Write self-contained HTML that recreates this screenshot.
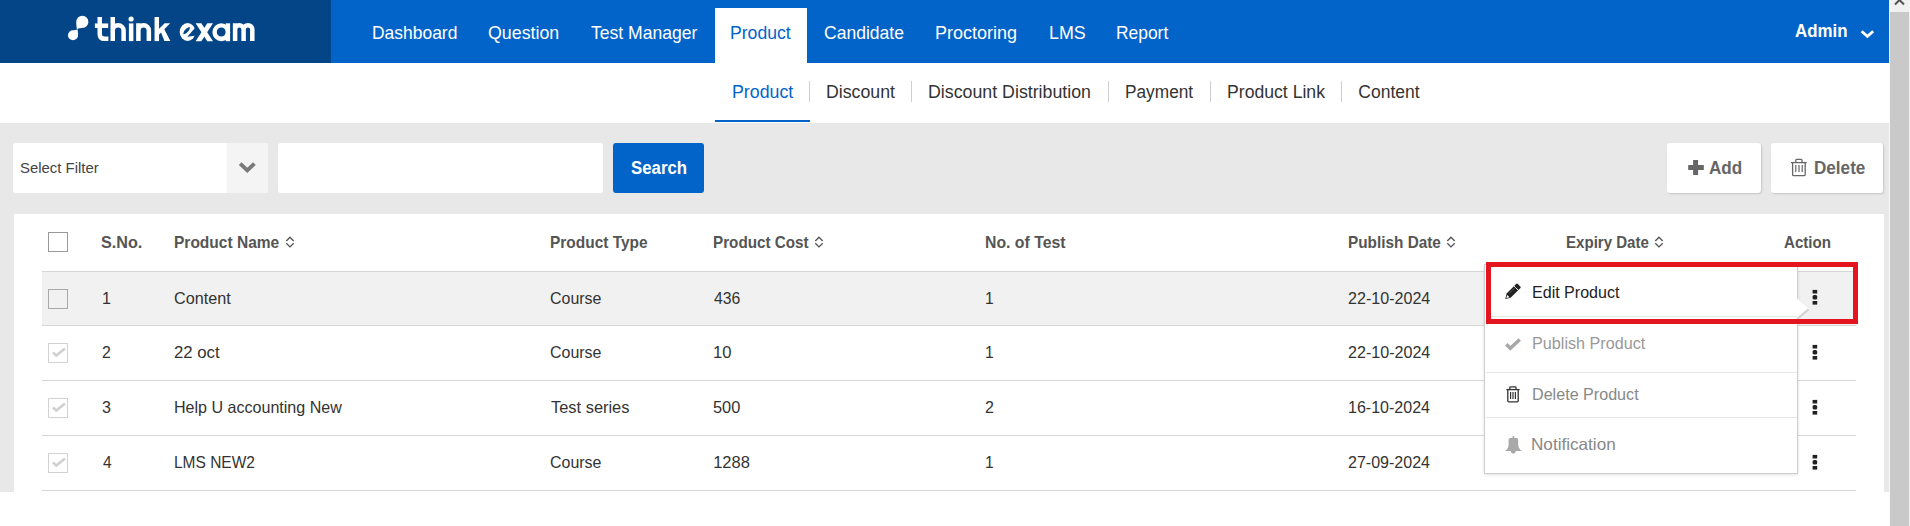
<!DOCTYPE html>
<html><head><meta charset="utf-8"><title>Product</title>
<style>
html,body{margin:0;padding:0;}
body{width:1910px;height:526px;overflow:hidden;position:relative;background:#fff;font-family:"Liberation Sans",sans-serif;}
.a{position:absolute;}
.t{position:absolute;white-space:nowrap;line-height:30px;height:30px;transform-origin:0 0;font-family:"Liberation Sans",sans-serif;}
.hl{position:absolute;left:42px;width:1814px;height:1px;background:#d6d6d6;}
.cb{position:absolute;left:48px;width:18px;height:18px;border:1px solid #a9a9a9;box-sizing:content-box;}
.cbd{border-color:#d2d2d2;}
.sep{position:absolute;top:81px;width:1px;height:21px;background:#cfcfcf;}
.msep{position:absolute;left:1486px;width:311px;height:1px;background:#e6e6e6;}
</style></head>
<body>
<!-- header -->
<div class="a" style="left:0;top:0;width:331px;height:63px;background:#034587"></div>
<div class="a" style="left:331px;top:0;width:1558px;height:63px;background:#0264c8"></div>
<div class="a" style="left:715px;top:8px;width:92px;height:55px;background:#fff"></div>
<svg class="a" style="left:0;top:0" width="331" height="63" viewBox="0 0 331 63">
 <g fill="#fff">
  <path d="M76.9 28.9 C76.4 26.5 76.2 24 76.2 21.9 A6.1 6.1 0 1 1 82.3 28 C80.3 28 78.6 28.3 76.9 28.9 Z"/>
  <path d="M77.6 29.2 C77.9 31 78.05 33 78.05 35.2 A5.05 5.05 0 1 1 73 30.15 C74.6 30.15 76.1 29.8 77.6 29.2 Z"/>
  <path d="M158.6 29.3 L164.6 23.3 L170.2 23.3 L158.6 34.9 Z"/>
  <path d="M160.6 31.2 L163.8 28.2 L170.3 41 L164.4 41 Z"/>
  <path d="M195.6 23.3 L201.3 23.3 L213 41.2 L207.3 41.2 Z"/>
  <path d="M207.3 23.3 L213 23.3 L201.3 41.2 L195.6 41.2 Z"/>
  <circle cx="131.1" cy="19" r="2.6"/>
  <rect x="225.7" y="23.3" width="4.4" height="17.9"/>
  <ellipse cx="187.6" cy="32" rx="7.9" ry="9"/>
  <path fill="#034587" d="M183.4 34.3 C183 31.5 186.5 27.4 189.7 27 C190.5 29.8 186.7 33.9 183.4 34.3 Z M187.3 36.7 L196.5 26.2 L196.5 35.4 Z"/>
  <path fill-rule="evenodd" d="M221.3 23.3 A8.9 8.95 0 1 0 221.3 41.2 A8.9 8.95 0 1 0 221.3 23.3 Z M221.3 27.4 A4.5 4.6 0 1 1 221.3 36.6 A4.5 4.6 0 1 1 221.3 27.4 Z"/>
 </g>
 <g fill="none" stroke="#fff" stroke-width="4.5">
  <path d="M99.75 16.9 V34.3 Q99.75 38.85 104.3 38.85 H108.4"/>
  <path d="M94.9 25.7 H108.2"/>
  <path d="M112.75 16.9 V41.1 M112.75 30.6 A5.42 5.42 0 0 1 123.6 30.6 V41.1"/>
  <path d="M131.15 23.4 V41.1"/>
  <path d="M138.4 23.3 V41.1 M138.4 30.5 A5.22 5.22 0 0 1 148.85 30.5 V41.1"/>
  <path d="M156.8 17 V41.1"/>
  <path d="M235.1 23.3 V40.9 M235.1 29.5 A4.25 4.25 0 0 1 243.6 29.5 V40.9 M243.6 29.5 A4.35 4.35 0 0 1 252.3 29.5 V40.9"/>
 </g>
</svg>
<!-- admin chevron -->
<svg class="a" style="left:1858px;top:27px" width="20" height="14" viewBox="0 0 20 14"><path d="M3.6 4.2 L9.4 9.4 L15.2 4.2" fill="none" stroke="#fff" stroke-width="2.8"/></svg>
<!-- scrollbar -->
<div class="a" style="left:1889px;top:0;width:21px;height:526px;background:#f1f1f1"></div>
<div class="a" style="left:1890px;top:12px;width:19px;height:514px;background:#c9c9c9"></div>
<div class="a" style="left:1889px;top:63px;width:1px;height:463px;background:#f9f9f9"></div>
<svg class="a" style="left:1889px;top:0" width="21" height="12" viewBox="0 0 21 12"><path d="M6 4.5 L10.5 0 L15 4.5" fill="none" stroke="#505050" stroke-width="2"/></svg>
<!-- subnav -->
<div class="sep" style="left:809px"></div>
<div class="sep" style="left:911px"></div>
<div class="sep" style="left:1108px"></div>
<div class="sep" style="left:1210px"></div>
<div class="sep" style="left:1341px"></div>
<div class="a" style="left:715px;top:120px;width:95px;height:2px;background:#0264c8"></div>
<!-- grey area -->
<div class="a" style="left:0;top:123px;width:1889px;height:369px;background:#e8e8e8"></div>
<!-- select -->
<div class="a" style="left:13px;top:143px;width:255px;height:50px;background:#fff;border-radius:3px;overflow:hidden">
  <div class="a" style="left:214px;top:0;width:41px;height:50px;background:#f4f4f4"></div>
</div>
<svg class="a" style="left:236px;top:158px" width="22" height="18" viewBox="0 0 22 18"><path d="M4.2 5.6 L11.3 12.4 L18.4 5.6" fill="none" stroke="#7a7a7a" stroke-width="3.9"/></svg>
<div class="a" style="left:278px;top:143px;width:325px;height:50px;background:#fff;border-radius:3px"></div>
<div class="a" style="left:613px;top:143px;width:91px;height:50px;background:#0264c8;border-radius:3px"></div>
<div class="a" style="left:1667px;top:143px;width:94px;height:50px;background:#fff;border-radius:3px;box-shadow:1px 1px 2px rgba(0,0,0,0.15)"></div>
<div class="a" style="left:1771px;top:143px;width:112px;height:50px;background:#fff;border-radius:3px;box-shadow:1px 1px 2px rgba(0,0,0,0.15)"></div>
<svg class="a" style="left:1686px;top:158px" width="20" height="19" viewBox="0 0 20 19"><path d="M2.2 9.4 H17.8 M9.6 2 V17" fill="none" stroke="#666" stroke-width="5" /></svg>
<svg class="a" style="left:1789px;top:157px" width="20" height="20" viewBox="0 0 20 20" fill="none" stroke="#666" stroke-width="1.3">
  <path d="M2 5.6 H17.8"/><path d="M6.8 5.6 V3.2 Q6.8 2.3 7.7 2.3 H12.1 Q13 2.3 13 3.2 V5.6"/>
  <path d="M3.6 5.6 V17.4 Q3.6 18.6 4.8 18.6 H15 Q16.2 18.6 16.2 17.4 V5.6"/>
  <path d="M6.8 8 V15 M10 8 V15 M13.2 8 V15" stroke-width="1.2"/>
</svg>
<!-- table panel -->
<div class="a" style="left:14px;top:214px;width:1870px;height:278px;background:#fff"></div>
<div class="a" style="left:42px;top:272px;width:1814px;height:53px;background:#f1f1f1"></div>
<div class="hl" style="top:271px"></div>
<div class="hl" style="top:325px"></div>
<div class="hl" style="top:380px"></div>
<div class="hl" style="top:435px"></div>
<div class="hl" style="top:490px"></div>
<div class="cb" style="top:232px;border-color:#9a9a9a"></div>
<div class="cb" style="top:289px;border-color:#a9a9a9"></div>
<div class="cb cbd" style="top:343px"></div>
<div class="cb cbd" style="top:398px"></div>
<div class="cb cbd" style="top:453px"></div>
<svg class="a" style="left:48px;top:343px" width="20" height="20" viewBox="0 0 20 20"><path d="M5 9.3 L8.3 12.6 L17 5.6" fill="none" stroke="#d0d0d0" stroke-width="2.6"/></svg>
<svg class="a" style="left:48px;top:398px" width="20" height="20" viewBox="0 0 20 20"><path d="M5 9.3 L8.3 12.6 L17 5.6" fill="none" stroke="#d0d0d0" stroke-width="2.6"/></svg>
<svg class="a" style="left:48px;top:453px" width="20" height="20" viewBox="0 0 20 20"><path d="M5 9.3 L8.3 12.6 L17 5.6" fill="none" stroke="#d0d0d0" stroke-width="2.6"/></svg>
<!-- sort icons -->
<svg class="a" style="left:284px;top:236px" width="12" height="13" viewBox="0 0 12 13"><path d="M2.3 5 L6 1.3 L9.7 5 M2.3 7.2 L6 10.9 L9.7 7.2" fill="none" stroke="#555" stroke-width="1.35"/></svg>
<svg class="a" style="left:813px;top:236px" width="12" height="13" viewBox="0 0 12 13"><path d="M2.3 5 L6 1.3 L9.7 5 M2.3 7.2 L6 10.9 L9.7 7.2" fill="none" stroke="#555" stroke-width="1.35"/></svg>
<svg class="a" style="left:1445px;top:236px" width="12" height="13" viewBox="0 0 12 13"><path d="M2.3 5 L6 1.3 L9.7 5 M2.3 7.2 L6 10.9 L9.7 7.2" fill="none" stroke="#555" stroke-width="1.35"/></svg>
<svg class="a" style="left:1653px;top:236px" width="12" height="13" viewBox="0 0 12 13"><path d="M2.3 5 L6 1.3 L9.7 5 M2.3 7.2 L6 10.9 L9.7 7.2" fill="none" stroke="#555" stroke-width="1.35"/></svg>
<!-- kebabs -->
<svg class="a" style="left:1810px;top:288px" width="10" height="20" viewBox="0 0 10 20" fill="#222"><rect x="2.6" y="1.9" width="4.6" height="3.6"/><rect x="2.6" y="7" width="4.6" height="4.6" rx="1.5"/><rect x="2.6" y="13" width="4.6" height="3.6"/></svg>
<svg class="a" style="left:1810px;top:343px" width="10" height="20" viewBox="0 0 10 20" fill="#222"><rect x="2.6" y="1.9" width="4.6" height="3.6"/><rect x="2.6" y="7" width="4.6" height="4.6" rx="1.5"/><rect x="2.6" y="13" width="4.6" height="3.6"/></svg>
<svg class="a" style="left:1810px;top:398px" width="10" height="20" viewBox="0 0 10 20" fill="#222"><rect x="2.6" y="1.9" width="4.6" height="3.6"/><rect x="2.6" y="7" width="4.6" height="4.6" rx="1.5"/><rect x="2.6" y="13" width="4.6" height="3.6"/></svg>
<svg class="a" style="left:1810px;top:453px" width="10" height="20" viewBox="0 0 10 20" fill="#222"><rect x="2.6" y="1.9" width="4.6" height="3.6"/><rect x="2.6" y="7" width="4.6" height="4.6" rx="1.5"/><rect x="2.6" y="13" width="4.6" height="3.6"/></svg>
<!-- dropdown menu -->
<div class="a" style="left:1484px;top:264px;width:312px;height:208px;background:#fff;border:1px solid #cfcfcf;box-shadow:0 1px 3px rgba(0,0,0,0.12)"></div>
<svg class="a" style="left:1796px;top:296px" width="18" height="26" viewBox="0 0 18 26"><path d="M0 1.5 L12.5 12.8 L1.5 22 L0 22 Z" fill="#fff"/><path d="M1.8 22.4 L12.6 13.4" stroke="#d4d4d4" stroke-width="2.2"/></svg>
<div class="msep" style="top:316px"></div>
<div class="msep" style="top:372px"></div>
<div class="msep" style="top:417px"></div>
<!-- menu icons -->
<svg class="a" style="left:1503px;top:282px" width="20" height="20" viewBox="0 0 20 20"><path d="M13.4 1.8 Q14 1.3 14.6 1.8 L17.5 4.7 Q18 5.3 17.5 5.9 L7.6 15.7 L2.3 17 L3.6 11.6 Z" fill="#222"/><path d="M11.1 4.1 L15.3 8.3" stroke="#fff" stroke-width="0.9"/><path d="M4.2 12.9 L6.5 15.2 L3.3 16.1 Z" fill="#fff"/><path d="M6 11.6 L12.4 5.2" stroke="#666" stroke-width="0.7"/></svg>
<svg class="a" style="left:1503px;top:335px" width="20" height="20" viewBox="0 0 20 20"><path d="M3.3 9.3 L7.3 13.3 L16.8 4.4" fill="none" stroke="#a8a8a8" stroke-width="3.4"/></svg>
<svg class="a" style="left:1504px;top:385px" width="18" height="19" viewBox="0 0 18 19" fill="none" stroke="#333" stroke-width="1.3">
  <path d="M2.4 4.6 H15.6"/><path d="M5.8 4.6 V2.6 Q5.8 1.9 6.5 1.9 H11.3 Q12 1.9 12 2.6 V4.6"/>
  <path d="M3.8 4.6 V15.8 Q3.8 16.8 4.8 16.8 H13.2 Q14.2 16.8 14.2 15.8 V4.6"/>
  <path d="M6.6 7 V14 M9 7 V14 M11.4 7 V14" stroke-width="1.2"/>
</svg>
<svg class="a" style="left:1503px;top:434px" width="22" height="22" viewBox="0 0 22 22" fill="#a9a9a9"><path d="M7.2 4 H13.6 Q15.1 4 15.2 6 V10.5 Q15.4 14.8 18.9 17.1 H2 Q5.5 14.8 5.6 10.5 V6 Q5.7 4 7.2 4 Z"/><path d="M7.8 17 H12.8 Q12.6 19.7 10.3 19.7 Q8 19.7 7.8 17 Z"/><rect x="9.5" y="2" width="1.8" height="3" rx="0.8"/></svg>
<div class="t" style="left:371.66px;top:18px;font-size:18.6px;font-weight:400;color:#ffffff;transform:scaleX(0.9382)">Dashboard</div>
<div class="t" style="left:488.44px;top:18px;font-size:18.6px;font-weight:400;color:#ffffff;transform:scaleX(0.9569)">Question</div>
<div class="t" style="left:591.30px;top:18px;font-size:18.6px;font-weight:400;color:#ffffff;transform:scaleX(0.9451)">Test Manager</div>
<div class="t" style="left:730.45px;top:18px;font-size:18.6px;font-weight:400;color:#0264c8;transform:scaleX(0.9476)">Product</div>
<div class="t" style="left:823.86px;top:18px;font-size:18.6px;font-weight:400;color:#ffffff;transform:scaleX(0.9422)">Candidate</div>
<div class="t" style="left:935.33px;top:18px;font-size:18.6px;font-weight:400;color:#ffffff;transform:scaleX(0.9687)">Proctoring</div>
<div class="t" style="left:1049.04px;top:18px;font-size:18.6px;font-weight:400;color:#ffffff;transform:scaleX(0.9611)">LMS</div>
<div class="t" style="left:1116.36px;top:18px;font-size:18.6px;font-weight:400;color:#ffffff;transform:scaleX(0.9364)">Report</div>
<div class="t" style="left:1795.09px;top:16px;font-size:18.6px;font-weight:700;color:#ffffff;transform:scaleX(0.9089)">Admin</div>
<div class="t" style="left:731.58px;top:77px;font-size:17.5px;font-weight:400;color:#0264c8;transform:scaleX(1.0153)">Product</div>
<div class="t" style="left:826.09px;top:77px;font-size:17.5px;font-weight:400;color:#333333;transform:scaleX(1.0134)">Discount</div>
<div class="t" style="left:928.48px;top:77px;font-size:17.5px;font-weight:400;color:#333333;transform:scaleX(1.0157)">Discount Distribution</div>
<div class="t" style="left:1125.21px;top:77px;font-size:17.5px;font-weight:400;color:#333333;transform:scaleX(0.9868)">Payment</div>
<div class="t" style="left:1227.29px;top:77px;font-size:17.5px;font-weight:400;color:#333333;transform:scaleX(1.0073)">Product Link</div>
<div class="t" style="left:1358.30px;top:77px;font-size:17.5px;font-weight:400;color:#333333;transform:scaleX(1.0000)">Content</div>
<div class="t" style="left:19.53px;top:153px;font-size:15.3px;font-weight:400;color:#444444;transform:scaleX(0.9738)">Select Filter</div>
<div class="t" style="left:630.98px;top:153px;font-size:18.3px;font-weight:700;color:#ffffff;transform:scaleX(0.9186)">Search</div>
<div class="t" style="left:1709.47px;top:153px;font-size:18.3px;font-weight:700;color:#666666;transform:scaleX(0.9333)">Add</div>
<div class="t" style="left:1813.66px;top:153px;font-size:18.3px;font-weight:700;color:#666666;transform:scaleX(0.9358)">Delete</div>
<div class="t" style="left:101.33px;top:228px;font-size:16.6px;font-weight:700;color:#555555;transform:scaleX(0.9750)">S.No.</div>
<div class="t" style="left:173.96px;top:228px;font-size:16.6px;font-weight:700;color:#555555;transform:scaleX(0.9351)">Product Name</div>
<div class="t" style="left:549.57px;top:228px;font-size:16.6px;font-weight:700;color:#555555;transform:scaleX(0.9311)">Product Type</div>
<div class="t" style="left:712.68px;top:228px;font-size:16.6px;font-weight:700;color:#555555;transform:scaleX(0.9175)">Product Cost</div>
<div class="t" style="left:984.85px;top:228px;font-size:16.6px;font-weight:700;color:#555555;transform:scaleX(0.9530)">No. of Test</div>
<div class="t" style="left:1347.88px;top:228px;font-size:16.6px;font-weight:700;color:#555555;transform:scaleX(0.9242)">Publish Date</div>
<div class="t" style="left:1565.59px;top:228px;font-size:16.6px;font-weight:700;color:#555555;transform:scaleX(0.9078)">Expiry Date</div>
<div class="t" style="left:1784.00px;top:228px;font-size:16.6px;font-weight:700;color:#555555;transform:scaleX(0.9098)">Action</div>
<div class="t" style="left:102.03px;top:283px;font-size:16.5px;font-weight:400;color:#333333;transform:scaleX(0.9719)">1</div>
<div class="t" style="left:173.92px;top:283px;font-size:16.5px;font-weight:400;color:#333333;transform:scaleX(0.9807)">Content</div>
<div class="t" style="left:549.63px;top:283px;font-size:16.5px;font-weight:400;color:#333333;transform:scaleX(0.9673)">Course</div>
<div class="t" style="left:714.20px;top:283px;font-size:16.5px;font-weight:400;color:#333333;transform:scaleX(0.9556)">436</div>
<div class="t" style="left:984.85px;top:283px;font-size:16.5px;font-weight:400;color:#333333;transform:scaleX(0.9500)">1</div>
<div class="t" style="left:1347.73px;top:283px;font-size:16.5px;font-weight:400;color:#333333;transform:scaleX(0.9747)">22-10-2024</div>
<div class="t" style="left:101.84px;top:337px;font-size:16.5px;font-weight:400;color:#333333;transform:scaleX(0.9625)">2</div>
<div class="t" style="left:173.98px;top:337px;font-size:16.5px;font-weight:400;color:#333333;transform:scaleX(1.0159)">22 oct</div>
<div class="t" style="left:549.63px;top:337px;font-size:16.5px;font-weight:400;color:#333333;transform:scaleX(0.9673)">Course</div>
<div class="t" style="left:713.19px;top:337px;font-size:16.5px;font-weight:400;color:#333333;transform:scaleX(1.0059)">10</div>
<div class="t" style="left:984.85px;top:337px;font-size:16.5px;font-weight:400;color:#333333;transform:scaleX(0.9500)">1</div>
<div class="t" style="left:1347.73px;top:337px;font-size:16.5px;font-weight:400;color:#333333;transform:scaleX(0.9747)">22-10-2024</div>
<div class="t" style="left:101.83px;top:392px;font-size:16.5px;font-weight:400;color:#333333;transform:scaleX(0.9719)">3</div>
<div class="t" style="left:174.03px;top:392px;font-size:16.5px;font-weight:400;color:#333333;transform:scaleX(0.9733)">Help U accounting New</div>
<div class="t" style="left:550.60px;top:392px;font-size:16.5px;font-weight:400;color:#333333;transform:scaleX(0.9949)">Test series</div>
<div class="t" style="left:713.21px;top:392px;font-size:16.5px;font-weight:400;color:#333333;transform:scaleX(0.9923)">500</div>
<div class="t" style="left:984.83px;top:392px;font-size:16.5px;font-weight:400;color:#333333;transform:scaleX(0.9719)">2</div>
<div class="t" style="left:1347.73px;top:392px;font-size:16.5px;font-weight:400;color:#333333;transform:scaleX(0.9719)">16-10-2024</div>
<div class="t" style="left:102.50px;top:447px;font-size:16.5px;font-weight:400;color:#333333;transform:scaleX(0.9444)">4</div>
<div class="t" style="left:174.06px;top:447px;font-size:16.5px;font-weight:400;color:#333333;transform:scaleX(0.9388)">LMS NEW2</div>
<div class="t" style="left:549.63px;top:447px;font-size:16.5px;font-weight:400;color:#333333;transform:scaleX(0.9673)">Course</div>
<div class="t" style="left:713.20px;top:447px;font-size:16.5px;font-weight:400;color:#333333;transform:scaleX(1.0000)">1288</div>
<div class="t" style="left:984.85px;top:447px;font-size:16.5px;font-weight:400;color:#333333;transform:scaleX(0.9500)">1</div>
<div class="t" style="left:1347.73px;top:447px;font-size:16.5px;font-weight:400;color:#333333;transform:scaleX(0.9719)">27-09-2024</div>
<div class="t" style="left:1532.03px;top:277px;font-size:16.5px;font-weight:400;color:#222222;transform:scaleX(0.9730)">Edit Product</div>
<div class="t" style="left:1532.02px;top:328px;font-size:16.5px;font-weight:400;color:#999999;transform:scaleX(0.9809)">Publish Product</div>
<div class="t" style="left:1531.62px;top:379px;font-size:16.5px;font-weight:400;color:#888888;transform:scaleX(0.9769)">Delete Product</div>
<div class="t" style="left:1531.36px;top:429px;font-size:16.5px;font-weight:400;color:#888888;transform:scaleX(1.0375)">Notification</div>
<!-- red highlight -->
<div class="a" style="left:1486px;top:262px;width:362px;height:52px;border:5px solid #e3151f;box-sizing:content-box"></div>
</body></html>
